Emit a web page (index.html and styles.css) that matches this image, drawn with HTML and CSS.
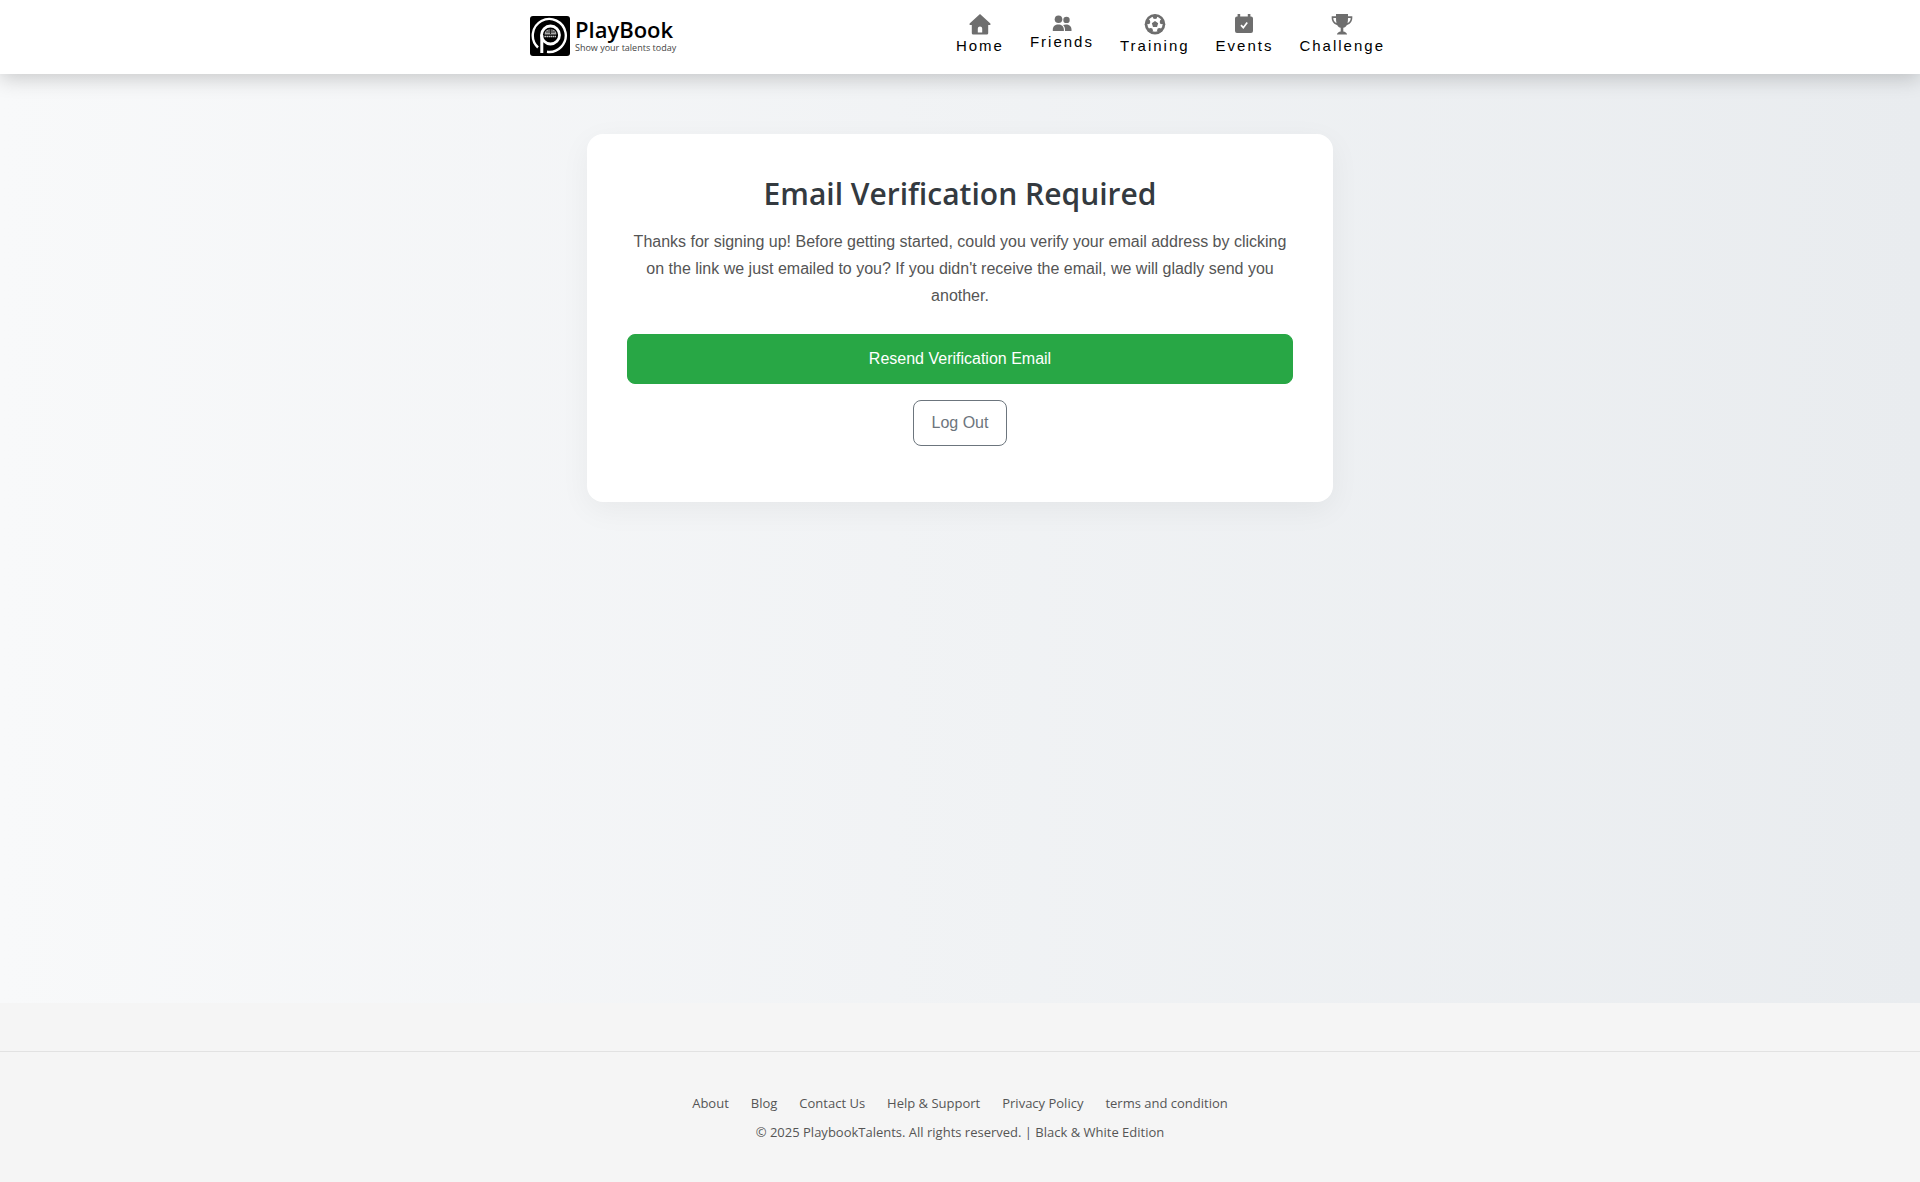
FILE: index.html
```html
<!DOCTYPE html>
<html lang="en">

<head>
  <meta charset="UTF-8">
  <meta name="viewport" content="width=device-width, initial-scale=1.0">
  <title>Email Verification - PlayBook</title>
  <link rel="stylesheet" href="styles.css">
</head>

<body>

  <header class="header">
    <div class="container">
      <a class="logo" href="#">
        <svg class="logo-mark" viewBox="0 0 40 40" aria-hidden="true">
          <rect width="40" height="40" rx="3" fill="#000" />
          <path d="M8 31.5A16.5 16.5 0 1 1 17 35.8" fill="none" stroke="#fff" stroke-width="2.4" />
          <circle cx="20.5" cy="19" r="9" fill="none" stroke="#fff" stroke-width="2.8" />
          <path d="M11.8 19v18" stroke="#fff" stroke-width="3" />
          <path d="M14.5 18.5a6 5.5 0 0 1 12 0z" fill="#aaa" />
          <path d="M16 16h9M18 14h5M20.5 13v5" stroke="#222" stroke-width="1" />
          <path d="M14.5 20.5h12" stroke="#ddd" stroke-width="1.5" stroke-dasharray="1.4 .6" />
        </svg>
        <span class="logo-text">
          <span class="logo-name">PlayBook</span>
          <span class="logo-slogan">Show your talents today</span>
        </span>
      </a>

      <nav class="nav">
        <a class="nav-item" href="#">
          <svg class="icon" viewBox="0 0 22 22" aria-hidden="true">
            <path d="M11 1 21.4 10.4V12H19.2v8.2a1.4 1.4 0 0 1-1.4 1.4H4.2a1.4 1.4 0 0 1-1.4-1.4V12H.6v-1.6zM8.8 19.4h4.4v-3.8a2.2 2.2 0 0 0-4.4 0z" fill-rule="evenodd" />
          </svg>
          Home
        </a>
        <a class="nav-item" href="#">
          <svg class="icon icon-small" viewBox="0 0 20 18" aria-hidden="true">
            <circle cx="6.5" cy="6.2" r="3.8" />
            <circle cx="14.5" cy="6.9" r="3.2" />
            <path d="M.8 18v-1.3c0-3.2 2.4-5.1 5.5-5.1s5.6 1.9 5.6 5.1V18zM13 18v-1.4c0-1.9-.7-3.4-1.9-4.5.8-.4 1.8-.6 2.9-.6 3 0 5.5 1.8 5.5 4.9V18z" />
          </svg>
          Friends
        </a>
        <a class="nav-item" href="#">
          <svg class="icon" viewBox="0 0 22 22" aria-hidden="true">
            <circle cx="11" cy="11.2" r="10.3" />
            <circle cx="11" cy="11.2" r="7.6" fill="#fff" />
            <path d="M11 7.9l3.2 2.3-1.2 3.8H9l-1.2-3.8z" />
            <circle cx="11" cy="3.8" r="2.3" />
            <circle cx="18" cy="8.9" r="2.3" />
            <circle cx="15.4" cy="17.2" r="2.3" />
            <circle cx="6.6" cy="17.2" r="2.3" />
            <circle cx="4" cy="8.9" r="2.3" />
          </svg>
          Training
        </a>
        <a class="nav-item" href="#">
          <svg class="icon" viewBox="0 0 22 22" aria-hidden="true">
            <path d="M3.6 1h2.6v2.4h7.6V1h2.6v2.4H17a2 2 0 0 1 2 2V18a2 2 0 0 1-2 2H3a2 2 0 0 1-2-2V5.4a2 2 0 0 1 2-2h.6z" />
            <path d="m7 12.2 2.3 2.5 3.9-5.2" fill="none" stroke="#fff" stroke-width="1.7" />
          </svg>
          Events
        </a>
        <a class="nav-item" href="#">
          <svg class="icon" viewBox="0 0 22 22" aria-hidden="true">
            <path d="M5 1h12v2.3h4.3c.4 4.7-1.6 7.7-5.6 8.9-.8 1.3-1.9 2.2-3.4 2.6v3.6c1.9.2 3.4 1.2 3.8 3H5.9c.4-1.8 1.9-2.8 3.8-3v-3.6c-1.5-.4-2.6-1.3-3.4-2.6-4-1.2-6-4.2-5.6-8.9H5zM2.3 4.9c.1 2.4 1.1 4.1 3.2 5.1C5.1 8.5 5 6.7 5 4.9zm17.4 0H17c0 1.8-.1 3.6-.5 5.1 2.1-1 3.1-2.7 3.2-5.1z" fill-rule="evenodd" />
          </svg>
          Challenge
        </a>
      </nav>
    </div>
  </header>

  <main class="main">
    <div class="card">
      <h2>Email Verification Required</h2>
      <p>Thanks for signing up! Before getting started, could you verify your email address by clicking on the link we just emailed to you? If you didn't receive the email, we will gladly send you another.</p>
      <form>
        <button type="submit" class="button btn-resend">Resend Verification Email</button>
      </form>
      <form>
        <button type="submit" class="button btn-logout">Log Out</button>
      </form>
    </div>
  </main>

  <footer class="footer">
    <div class="footer-inner">
      <div class="footer-links">
        <a href="#">About</a>
        <a href="#">Blog</a>
        <a href="#">Contact Us</a>
        <a href="#">Help &amp; Support</a>
        <a href="#">Privacy Policy</a>
        <a href="#">terms and condition</a>
      </div>
      <p>© 2025 PlaybookTalents. All rights reserved. | Black &amp; White Edition</p>
    </div>
  </footer>

</body>

</html>
```

FILE: styles.css
```css
* {
  margin: 0;
  padding: 0;
  box-sizing: border-box;
}

body {
  display: flex;
  flex-direction: column;
  min-height: 100vh;
  font-family: "Segoe UI", "Open Sans", sans-serif;
  font-size: 16px;
  background: #f5f5f5;
}

a {
  text-decoration: none;
}

.header {
  position: relative;
  background: #fff;
  box-shadow: 0 4px 20px rgba(0, 0, 0, 0.2);
}

.container {
  display: flex;
  justify-content: space-between;
  align-items: flex-start;
  max-width: 860px;
  min-height: 74px;
  margin: 0 auto;
}

.logo {
  display: flex;
  gap: 5px;
  padding-top: 16px;
}

.logo-mark {
  width: 40px;
  height: 40px;
}

.logo-text {
  display: flex;
  flex-direction: column;
}

.logo-name {
  font-size: 22px;
  font-weight: 600;
  line-height: 26px;
  color: #000;
}

.logo-slogan {
  font-size: 9px;
  line-height: 12px;
  color: #444;
}

.nav {
  display: flex;
  gap: 26px;
  padding: 13px 5px 0 0;
}

.nav-item {
  display: flex;
  flex-direction: column;
  align-items: center;
  font-family: Arial, "Liberation Sans", sans-serif;
  font-size: 15px;
  line-height: 22px;
  letter-spacing: 2px;
  color: #000;
}

.icon {
  width: 22px;
  height: 22px;
  fill: #6e6e6e;
}

.icon-small {
  width: 20px;
  height: 18px;
}

.main {
  flex: 1;
  padding: 60px 16px;
  background: linear-gradient(to right, #f8f9fa, #e9ecef);
}

.card {
  max-width: 746px;
  margin: 0 auto;
  padding: 40px 40px 56px;
  text-align: center;
  background: #fff;
  border-radius: 16px;
  box-shadow: 0 8px 30px rgba(0, 0, 0, 0.05);
}

.card h2 {
  margin-bottom: 14px;
  font-size: 30px;
  font-weight: 600;
  line-height: 40px;
  color: #343a40;
}

.card p {
  margin-bottom: 24px;
  font-family: Arial, "Liberation Sans", sans-serif;
  line-height: 1.7;
  color: #555;
}

.button {
  font-family: Arial, "Liberation Sans", sans-serif;
  font-size: 16px;
  line-height: 24px;
  border-radius: 8px;
  cursor: pointer;
}

.btn-resend {
  width: 100%;
  margin-bottom: 16px;
  padding: 12px;
  border: 1px solid #28a745;
  background: #28a745;
  color: #fff;
}

.btn-logout {
  padding: 10px 18px;
  border: 1px solid #6c757d;
  background: #fff;
  color: #6c757d;
}

.footer {
  padding-top: 48px;
}

.footer-inner {
  padding: 40px 16px 38px;
  border-top: 1px solid #e2e2e2;
  font-size: 13px;
  line-height: 23px;
  text-align: center;
  color: #555;
}

.footer-links {
  display: flex;
  flex-wrap: wrap;
  justify-content: center;
  gap: 6px 22px;
  margin-bottom: 6px;
}

.footer-links a {
  color: #555;
}
```
